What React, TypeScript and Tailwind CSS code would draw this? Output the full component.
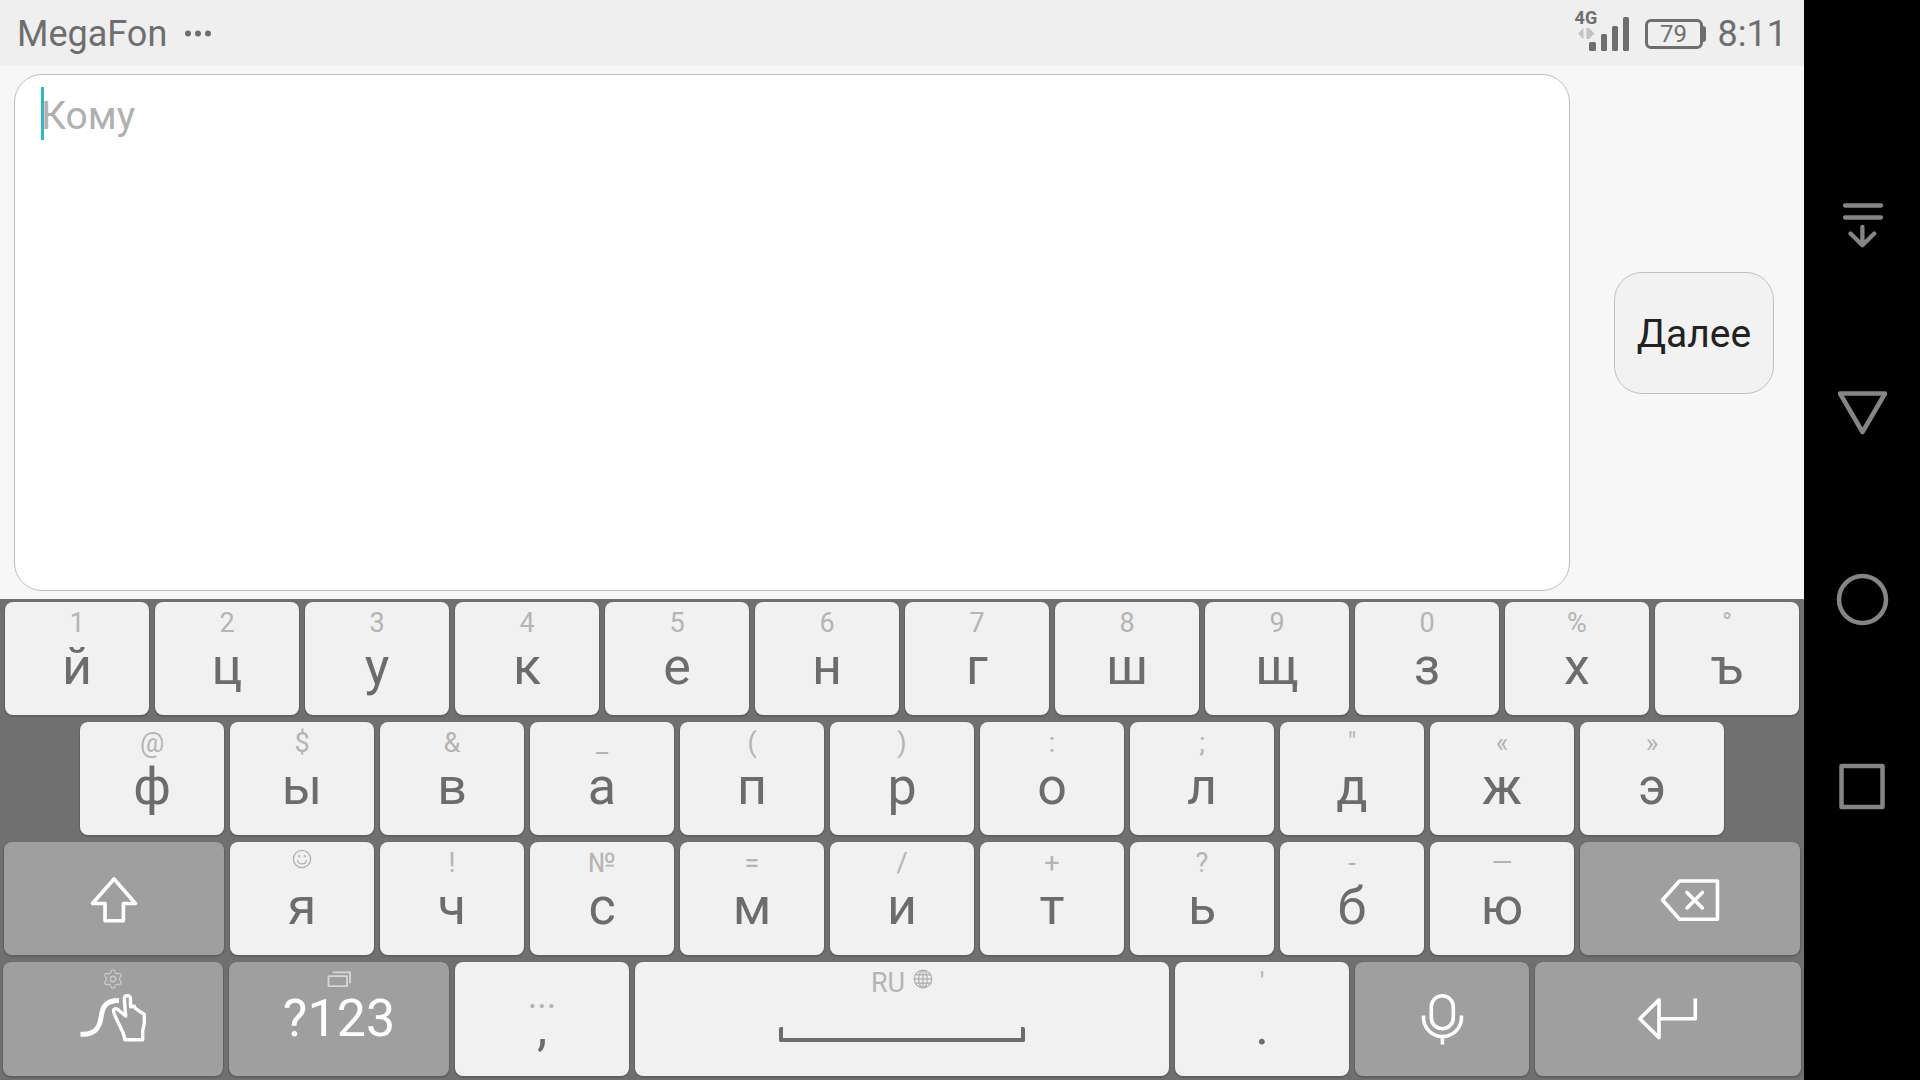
import type { ReactNode } from "react";
import { Settings } from "lucide-react";

type LetterKey = { hint: ReactNode; label: string };

const LIGHT_KEY = "bg-[#f1f1f1] text-[#6c6c6c]";
const DARK_KEY = "bg-[#9f9f9f] text-white";
const KEY_BASE =
  "flex min-w-0 basis-0 flex-col items-center rounded-lg shadow-[0_1px_1px_1px_#606060]";

function SmileHint() {
  return (
    <svg viewBox="0 0 20 20" className="size-5" fill="none" stroke="currentColor" strokeWidth="1.4">
      <circle cx="10" cy="10" r="8.6" />
      <path d="M5.6 11.6a4.5 4.2 0 0 0 8.8 0" strokeLinecap="round" />
      <circle cx="7.3" cy="7.2" r="0.9" fill="currentColor" strokeWidth="0.6" />
      <circle cx="12.7" cy="7.2" r="0.9" fill="currentColor" strokeWidth="0.6" />
    </svg>
  );
}

function GlobeHint() {
  return (
    <svg viewBox="0 0 20 20" className="size-5" fill="none" stroke="currentColor" strokeWidth="1.4">
      <circle cx="10" cy="10" r="8.7" />
      <ellipse cx="10" cy="10" rx="4.3" ry="8.7" />
      <path d="M10 1.3v17.4M1.3 10h17.4M3 5.7h14M3 14.3h14" />
    </svg>
  );
}

const ROW_ONE: LetterKey[] = [
  { hint: "1", label: "й" },
  { hint: "2", label: "ц" },
  { hint: "3", label: "у" },
  { hint: "4", label: "к" },
  { hint: "5", label: "е" },
  { hint: "6", label: "н" },
  { hint: "7", label: "г" },
  { hint: "8", label: "ш" },
  { hint: "9", label: "щ" },
  { hint: "0", label: "з" },
  { hint: "%", label: "х" },
  { hint: "°", label: "ъ" },
];

const ROW_TWO: LetterKey[] = [
  { hint: "@", label: "ф" },
  { hint: "$", label: "ы" },
  { hint: "&", label: "в" },
  { hint: "_", label: "а" },
  { hint: "(", label: "п" },
  { hint: ")", label: "р" },
  { hint: ":", label: "о" },
  { hint: ";", label: "л" },
  { hint: '"', label: "д" },
  { hint: "«", label: "ж" },
  { hint: "»", label: "э" },
];

const ROW_THREE: LetterKey[] = [
  { hint: <SmileHint />, label: "я" },
  { hint: "!", label: "ч" },
  { hint: "№", label: "с" },
  { hint: "=", label: "м" },
  { hint: "/", label: "и" },
  { hint: "+", label: "т" },
  { hint: "?", label: "ь" },
  { hint: "-", label: "б" },
  { hint: "—", label: "ю" },
];

function Letter({ hint, label, grow = "grow-144" }: LetterKey & { grow?: string }) {
  return (
    <button type="button" aria-label={label} className={`${KEY_BASE} ${LIGHT_KEY} ${grow} pt-[7px]`}>
      <span className="h-7 text-[27px] leading-7 text-[#b4b4b4]">{hint}</span>
      <span className="mt-1 text-[52px] leading-[52px]">{label}</span>
    </button>
  );
}

function Keyboard() {
  return (
    <section aria-label="Клавиатура" className="flex flex-col gap-[7px] bg-[#707070] pt-[3px] pb-1">
      <div className="flex h-[113px] gap-1.5 px-[5px]">
        {ROW_ONE.map((k) => (
          <Letter key={k.label} {...k} />
        ))}
      </div>
      <div className="flex h-[113px] gap-1.5 px-20">
        {ROW_TWO.map((k) => (
          <Letter key={k.label} {...k} />
        ))}
      </div>
      <div className="flex h-[113px] gap-1.5 px-1">
        <button type="button" aria-label="Shift" className={`${KEY_BASE} ${DARK_KEY} grow-220 justify-center`}>
          <svg viewBox="0 0 60 60" className="size-15" fill="none" stroke="currentColor" strokeWidth="3.6" strokeLinejoin="round">
            <path d="M30 10 51.5 34.5H39.4V51.8H21V34.5H8.5Z" />
          </svg>
        </button>
        {ROW_THREE.map((k) => (
          <Letter key={k.label} {...k} />
        ))}
        <button type="button" aria-label="Удалить" className={`${KEY_BASE} ${DARK_KEY} grow-220 justify-center`}>
          <svg viewBox="0 0 80 60" className="h-15 w-20" fill="none" stroke="currentColor" strokeWidth="3.6" strokeLinejoin="round" strokeLinecap="round">
            <path d="M12.5 31 29.5 12H67.5V50.3H29.5Z" />
            <path d="m37 23.5 15.4 15.4M52.4 23.5 37 38.9" />
          </svg>
        </button>
      </div>
      <div className="flex h-[114px] gap-1.5 px-[3px]">
        <button type="button" aria-label="Ввод росчерком" className={`${KEY_BASE} ${DARK_KEY} grow-220 pt-1.5`}>
          <Settings className="size-[22px] text-[#c9c9c9]" strokeWidth={1.4} />
          <svg viewBox="0 0 80 58" className="h-[58px] w-20" fill="none" stroke="currentColor" strokeWidth="3.4" strokeLinejoin="round">
            <path d="M7.5 44.3h3C22 44.3 26.5 38 28 27.5S32 10.5 46 10.5" strokeWidth="5" />
            <path d="M54.3 5.7c-2 0-3 1.4-3 3.2L52.7 26 46 20.5c-3.5-3.3-6.5-1.5-5 2.5l1.8 4.5 7.5 15.8 1.7 6.4h17.7V41l1.6-7.7v-9L62.3 18.3l-1-2.1-3.8.5V8.7c0-2-1.2-3-3.2-3Z" />
          </svg>
        </button>
        <button type="button" aria-label="?123" className={`${KEY_BASE} ${DARK_KEY} grow-220 pt-[7px]`}>
          <svg viewBox="0 0 28 20" className="h-5 w-7 text-[#d6d6d6]" fill="none" stroke="currentColor" strokeWidth="1.8">
            <path d="M3.5 7.2H22V17.2H3.5ZM7.7 3.3H25V14.3" />
          </svg>
          <span className="mt-1 text-[52px] leading-[52px]">?123</span>
        </button>
        <button type="button" aria-label="Запятая" className={`${KEY_BASE} ${LIGHT_KEY} grow-174 pt-4`}>
          <span className="h-5 text-[36px] leading-9 text-[#b4b4b4]">...</span>
          <span className="mt-1 text-[52px] leading-[52px]">,</span>
        </button>
        <button type="button" aria-label="Пробел" className={`${KEY_BASE} ${LIGHT_KEY} grow-534 pt-[7px]`}>
          <span className="flex h-7 gap-2 text-[27px] leading-7 text-[#b4b4b4]">
            RU
            <GlobeHint />
          </span>
          <span className="mt-[30px] h-[15px] w-[46%] rounded-xs border-x-4 border-b-4 border-[#6c6c6c]" />
        </button>
        <Letter hint="'" label="." grow="grow-174" />
        <button type="button" aria-label="Голосовой ввод" className={`${KEY_BASE} ${DARK_KEY} grow-174 justify-center`}>
          <svg viewBox="0 0 60 60" className="size-15" fill="none" stroke="currentColor" strokeWidth="3.6">
            <rect x="19.3" y="6.7" width="22" height="33" rx="11" />
            <path d="M11.5 26.5v2a19 19 0 0 0 38 0v-2M30.4 47.5V55.5" />
          </svg>
        </button>
        <button type="button" aria-label="Ввод" className={`${KEY_BASE} ${DARK_KEY} grow-266 justify-center`}>
          <svg viewBox="0 0 80 60" className="h-15 w-20" fill="none" stroke="currentColor" strokeWidth="3.6" strokeLinejoin="round">
            <path d="M11.8 29.7 31 10.8V48.6ZM31 29.7H67.3V9.5" />
          </svg>
        </button>
      </div>
    </section>
  );
}

function StatusBar() {
  return (
    <header className="flex h-[66px] items-center justify-between bg-[#efefef] px-[17px] pt-0.5 text-[#6e6e6e]">
      <div className="flex items-center gap-4 text-4xl leading-10">
        <span>MegaFon</span>
        <svg viewBox="0 0 30 8" className="h-2 w-[30px]" fill="currentColor" aria-label="Ещё">
          <circle cx="5" cy="3.5" r="3" />
          <circle cx="15" cy="3.5" r="3" />
          <circle cx="25" cy="3.5" r="3" />
        </svg>
      </div>
      <div className="flex items-center">
        <div className="relative h-10 w-[54px]">
          <span className="absolute -top-0.5 left-0 text-lg leading-3 font-bold">4G</span>
          <svg viewBox="0 0 54 40" className="h-10 w-[54px]" fill="currentColor">
            <path d="M3 19.5 8.5 14V25ZM19.5 19.5 14 14H11.5V25H14Z" fill="#c2c2c2" />
            <rect x="14" y="28" width="7" height="9" rx="1.5" />
            <rect x="26" y="20" width="6" height="17" rx="1.5" />
            <rect x="37" y="12" width="6" height="25" rx="1.5" />
            <rect x="48" y="3" width="6" height="34" rx="1.5" />
          </svg>
        </div>
        <div className="ml-4 flex items-center">
          <span className="flex h-[30px] w-[58px] items-center justify-center rounded-md border-3 border-[#6e6e6e] text-2xl leading-6">
            79
          </span>
          <span className="h-4 w-[3px] rounded-r-sm bg-[#6e6e6e]" />
        </div>
        <time className="ml-3 text-4xl leading-10">8:11</time>
      </div>
    </header>
  );
}

function NavButton({ label, children }: { label: string; children: ReactNode }) {
  return (
    <button type="button" aria-label={label} className="flex h-[187px] w-full items-center justify-center">
      <svg viewBox="0 0 60 60" className="size-15" fill="none" stroke="currentColor" strokeWidth="4.5" strokeLinejoin="round" strokeLinecap="round">
        {children}
      </svg>
    </button>
  );
}

export default function App() {
  return (
    <div className="flex min-h-screen bg-black font-['Roboto',sans-serif]">
      <div className="flex min-w-0 flex-1 flex-col bg-[#f7f7f7]">
        <StatusBar />
        <main className="flex flex-1 items-center py-2 pr-[30px] pl-3.5">
          <div className="relative flex flex-1 self-stretch">
            <textarea
              aria-label="Кому"
              placeholder="Кому"
              className="w-full resize-none rounded-[28px] border border-[#bdbdbd] bg-white px-[26px] pt-[15px] text-[39px] leading-[53px] text-[#222] outline-none placeholder:text-[#b0b0b0] placeholder:opacity-100"
            />
            <span className="absolute top-[13px] left-[27px] h-[53px] w-[3px] bg-[#2bb9c8]" />
          </div>
          <button
            type="button"
            className="ml-11 h-[122px] w-40 rounded-[28px] border border-[#c0c0c0] bg-[#f2f2f2] pt-1 text-[39px] leading-[53px] text-[#222]"
          >
            Далее
          </button>
        </main>
        <Keyboard />
      </div>
      <nav aria-label="Навигация" className="flex w-[116px] flex-col justify-center pb-[68px] text-[#858585]">
        <NavButton label="Скрыть панель">
          <path d="M13 9.5H49M13 21.5H49M30.4 31V49M18.5 37.5 30.4 49.3 42.3 37.5" strokeWidth="4.3" />
        </NavButton>
        <NavButton label="Назад">
          <path d="M8 10.5H53L30.5 49Z" />
        </NavButton>
        <NavButton label="Домой">
          <circle cx="30.5" cy="29.5" r="23.5" />
        </NavButton>
        <NavButton label="Недавние">
          <rect x="9.5" y="9" width="41" height="41" />
        </NavButton>
      </nav>
    </div>
  );
}
